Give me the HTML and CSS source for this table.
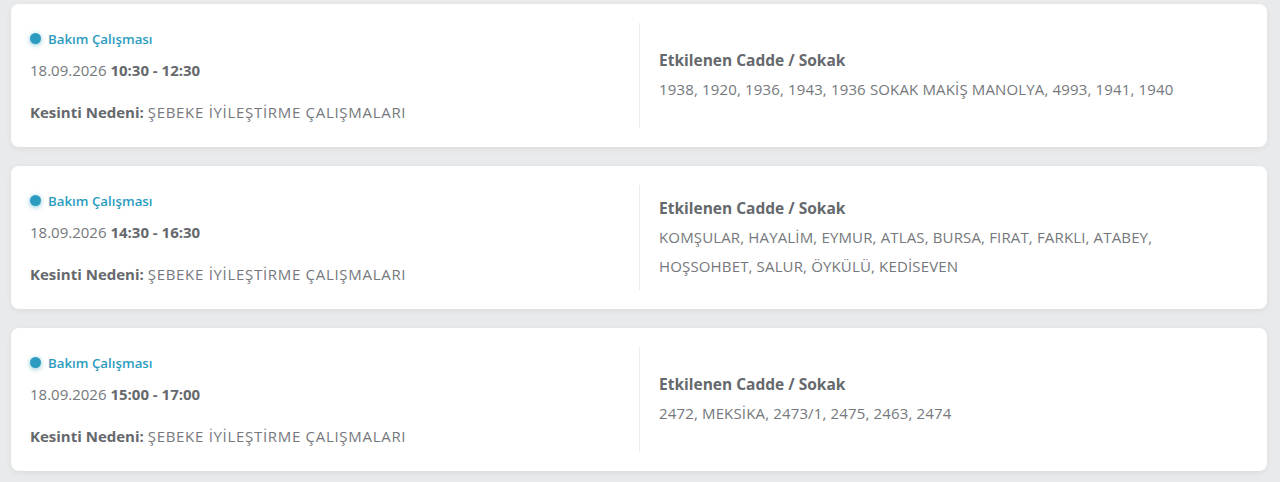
FILE: index.html
```html
<!DOCTYPE html>
<html lang="tr">
<head>
<meta charset="utf-8">
<link rel="stylesheet" href="styles.css">
</head>
<body>
<div class="list">
  <div class="card">
    <div class="col left">
      <div class="type"><span class="dot"></span>Bakım Çalışması</div>
      <div class="date">18.09.2026 <b>10:30 - 12:30</b></div>
      <div class="reason"><b>Kesinti Nedeni:</b> <span class="caps">ŞEBEKE İYİLEŞTİRME ÇALIŞMALARI</span></div>
    </div>
    <div class="col right">
      <div class="title">Etkilenen Cadde / Sokak</div>
      <div class="streets">1938, 1920, 1936, 1943, 1936 SOKAK MAKİŞ MANOLYA, 4993, 1941, 1940</div>
    </div>
  </div>
  <div class="card">
    <div class="col left">
      <div class="type"><span class="dot"></span>Bakım Çalışması</div>
      <div class="date">18.09.2026 <b>14:30 - 16:30</b></div>
      <div class="reason"><b>Kesinti Nedeni:</b> <span class="caps">ŞEBEKE İYİLEŞTİRME ÇALIŞMALARI</span></div>
    </div>
    <div class="col right">
      <div class="title">Etkilenen Cadde / Sokak</div>
      <div class="streets">KOMŞULAR, HAYALİM, EYMUR, ATLAS, BURSA, FIRAT, FARKLI, ATABEY, HOŞSOHBET, SALUR, ÖYKÜLÜ, KEDİSEVEN</div>
    </div>
  </div>
  <div class="card">
    <div class="col left">
      <div class="type"><span class="dot"></span>Bakım Çalışması</div>
      <div class="date">18.09.2026 <b>15:00 - 17:00</b></div>
      <div class="reason"><b>Kesinti Nedeni:</b> <span class="caps">ŞEBEKE İYİLEŞTİRME ÇALIŞMALARI</span></div>
    </div>
    <div class="col right">
      <div class="title">Etkilenen Cadde / Sokak</div>
      <div class="streets">2472, MEKSİKA, 2473/1, 2475, 2463, 2474</div>
    </div>
  </div>
</div>
</body>
</html>
```

FILE: styles.css
```css
html, body {
  margin: 0;
  padding: 0;
}
body {
  background: #e9eaec;
  font-family: "Open Sans", "Liberation Sans", sans-serif;
  color: #75787c;
}
.list {
  display: flex;
  flex-direction: column;
  gap: 19px;
  padding: 4px 13px 10px 11px;
}
.card {
  background: #fff;
  border-radius: 8px;
  box-shadow: 0 2px 6px rgba(0, 0, 0, 0.06);
  display: grid;
  grid-template-columns: 1fr 1fr;
  padding: 19px 19px;
  height: 143px;
  box-sizing: border-box;
}
.col {
  display: flex;
  flex-direction: column;
  justify-content: center;
}
.right {
  border-left: 1px solid #ececee;
  padding-left: 19px;
  padding-right: 40px;
}
.type {
  display: flex;
  align-items: center;
  font-size: 13.3px;
  font-weight: 600;
  color: #2b9cc0;
  line-height: 18px;
}
.dot {
  width: 11px;
  height: 11px;
  border-radius: 50%;
  background: #2b9cc0;
  box-shadow: 0 1px 5px rgba(43, 156, 192, 0.6);
  margin-right: 7px;
}
.date {
  font-size: 15px;
  line-height: 20px;
  margin-top: 12px;
}
.date b, .reason b, .title {
  font-weight: 700;
  color: #65686c;
}
.reason {
  font-size: 15px;
  line-height: 20px;
  margin-top: 22px;
}
.caps {
  letter-spacing: 0.7px;
}
.title {
  font-size: 15.5px;
  line-height: 29px;
}
.streets {
  font-size: 15px;
  line-height: 29.5px;
  letter-spacing: 0.15px;
}
```
